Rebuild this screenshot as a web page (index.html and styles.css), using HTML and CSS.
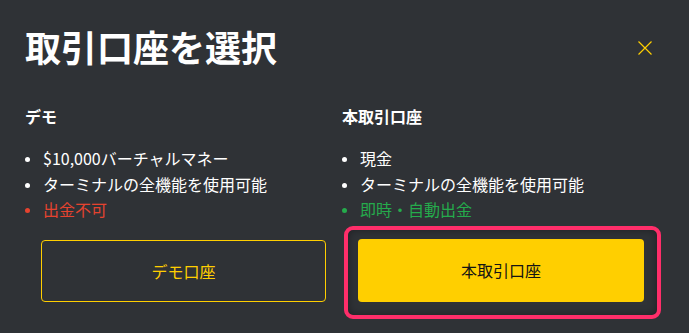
FILE: index.html
```html
<!DOCTYPE html>
<html lang="ja">
<head>
<meta charset="utf-8">
<link rel="stylesheet" href="styles.css">
</head>
<body>
<div class="modal">
  <div class="header">
    <h1 class="title">取引口座を選択</h1>
    <button class="close" aria-label="close">
      <svg width="14" height="14" viewBox="0 0 14 14"><path d="M0.5 0.5L13.5 13.5M13.5 0.5L0.5 13.5" stroke="#ffcf00" stroke-width="1.2" fill="none"/></svg>
    </button>
  </div>
  <div class="columns">
    <div class="col">
      <h2 class="col-title">デモ</h2>
      <ul class="list">
        <li>$10,000バーチャルマネー</li>
        <li>ターミナルの全機能を使用可能</li>
        <li class="neg">出金不可</li>
      </ul>
      <button class="btn btn-outline">デモ口座</button>
    </div>
    <div class="col">
      <h2 class="col-title">本取引口座</h2>
      <ul class="list">
        <li>現金</li>
        <li>ターミナルの全機能を使用可能</li>
        <li class="pos">即時・自動出金</li>
      </ul>
      <button class="btn btn-solid highlight">本取引口座</button>
    </div>
  </div>
</div>
</body>
</html>
```

FILE: styles.css
```css
html, body {
  margin: 0;
  padding: 0;
  background: #2f3236;
}
body {
  width: 689px;
  height: 333px;
  overflow: hidden;
  font-family: "Noto Sans CJK JP", "Noto Sans", sans-serif;
  color: #ffffff;
}
.modal {
  padding: 24px 0 0 25px;
}
.header {
  display: flex;
  align-items: center;
  justify-content: space-between;
  padding-right: 37px;
}
.title {
  margin: 0;
  font-size: 36px;
  line-height: 44px;
  font-weight: 700;
  letter-spacing: 0;
}
.close {
  background: none;
  border: 0;
  padding: 0;
  width: 14px;
  height: 14px;
  display: block;
  margin-top: 4px;
}
.close svg { display: block; }
.columns {
  display: grid;
  grid-template-columns: 317px 317px;
  margin-top: 36px;
}
.col-title {
  margin: 0;
  font-size: 16px;
  line-height: 24px;
  font-weight: 700;
}
.list {
  list-style: none;
  margin: 18px 0 0 0;
  padding: 0;
  font-size: 16px;
  line-height: 25.5px;
}
.list li {
  display: flex;
  align-items: center;
}
.list li::before {
  content: "";
  width: 5px;
  height: 5px;
  border-radius: 50%;
  background: currentColor;
  margin: 0 13px 0 0;
  flex: none;
  position: relative;
  top: 1px;
}
.list .neg { color: #e5432f; }
.list .pos { color: #25ab4c; }
.btn {
  display: flex;
  align-items: center;
  justify-content: center;
  width: 285px;
  height: 62px;
  margin: 17px 16px 0 16px;
  border-radius: 4px;
  font-family: inherit;
  font-size: 16px;
  box-sizing: border-box;
  padding: 0;
}
.btn-outline {
  background: transparent;
  border: 1px solid #ffcf00;
  color: #ffcf00;
}
.btn-solid {
  background: #ffcf00;
  border: 0;
  color: #141414;
  width: 286px;
  height: 63px;
  margin-top: 16px;
}
.highlight {
  position: relative;
}
.highlight::after {
  content: "";
  position: absolute;
  left: -14px;
  right: -17px;
  top: -13px;
  bottom: -17px;
  border: 4px solid #ff2e6a;
  border-radius: 9px;
  box-shadow: inset 0 0 8px rgba(0, 0, 0, 0.35);
  pointer-events: none;
}
```
